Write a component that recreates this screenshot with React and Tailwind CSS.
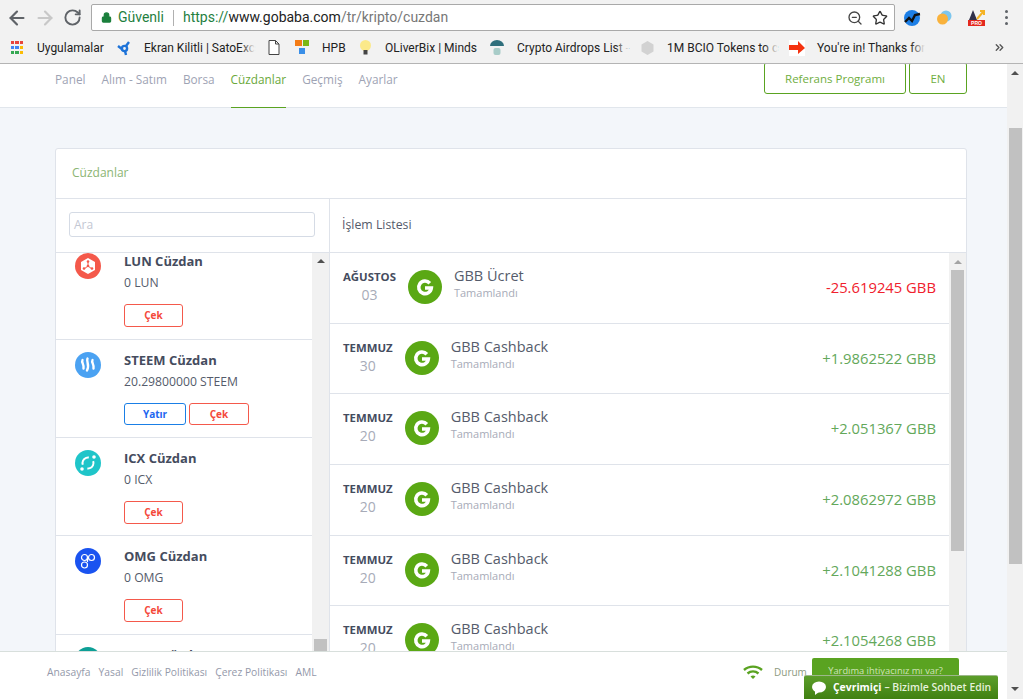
import React from 'react';
import { ArrowLeft, ArrowRight, RotateCw, Lock, ZoomOut, Star, ChevronsRight } from 'lucide-react';

const navItems = ['Panel', 'Alım - Satım', 'Borsa', 'Cüzdanlar', 'Geçmiş', 'Ayarlar'];

const transactions = [
  { month: 'AĞUSTOS', day: '03', title: 'GBB Ücret', amount: '-25.619245 GBB', negative: true },
  { month: 'TEMMUZ', day: '30', title: 'GBB Cashback', amount: '+1.9862522 GBB' },
  { month: 'TEMMUZ', day: '20', title: 'GBB Cashback', amount: '+2.051367 GBB' },
  { month: 'TEMMUZ', day: '20', title: 'GBB Cashback', amount: '+2.0862972 GBB' },
  { month: 'TEMMUZ', day: '20', title: 'GBB Cashback', amount: '+2.1041288 GBB' },
  { month: 'TEMMUZ', day: '20', title: 'GBB Cashback', amount: '+2.1054268 GBB' },
];

const LunIcon = () => (
  <svg width="26" height="26" viewBox="0 0 26 26">
    <circle cx="13" cy="13" r="13" fill="#f4594b" />
    <path d="M13 5l7 4v8l-7 4-7-4V9z" fill="#fff" />
    <path d="M13 13V8M13 13l-4 3M13 13l4 3" stroke="#f4594b" strokeWidth="1" />
    <circle cx="13" cy="8.500" r="1.300" fill="#f4594b" />
    <circle cx="9" cy="15.500" r="1.300" fill="#f4594b" />
    <circle cx="17" cy="15.500" r="1.300" fill="#f4594b" />
    <circle cx="13" cy="13" r="1.300" fill="#f4594b" />
  </svg>
);

const SteemIcon = () => (
  <svg width="26" height="26" viewBox="0 0 26 26">
    <circle cx="13" cy="13" r="13" fill="#4ba2f2" />
    <g fill="none" stroke="#fff" strokeWidth="2.400" strokeLinecap="round">
      <path d="M7.500 8c-1.500 2.500 2 4.500 1 8.500" />
      <path d="M12.500 6.500c-1.500 3 2.500 6-.5 12" />
      <path d="M17.500 8c-1.500 2.500 2 4.500 1 8.500" />
    </g>
  </svg>
);

const IcxIcon = () => (
  <svg width="26" height="26" viewBox="0 0 26 26">
    <circle cx="13" cy="13" r="13" fill="#1fc5c9" />
    <circle cx="13" cy="13" r="5.500" fill="none" stroke="#fff" strokeWidth="2" strokeDasharray="11 6" transform="rotate(-20 13 13)" />
    <circle cx="19" cy="7" r="1.800" fill="#fff" />
    <circle cx="7" cy="19" r="1.800" fill="#fff" />
  </svg>
);

const OmgIcon = () => (
  <svg width="26" height="26" viewBox="0 0 26 26">
    <circle cx="13" cy="13" r="13" fill="#1a53f0" />
    <g fill="none" stroke="#fff" strokeWidth="1.200">
      <circle cx="9.500" cy="9.500" r="3" />
      <circle cx="16.500" cy="9.500" r="3" />
      <circle cx="9.500" cy="17" r="3" />
      <path d="M12.500 9.500v4.500" />
    </g>
  </svg>
);

const wallets = [
  { name: 'LUN Cüzdan', balance: '0 LUN', icon: <LunIcon />, tall: true },
  { name: 'STEEM Cüzdan', balance: '20.29800000 STEEM', icon: <SteemIcon />, deposit: true },
  { name: 'ICX Cüzdan', balance: '0 ICX', icon: <IcxIcon /> },
  { name: 'OMG Cüzdan', balance: '0 OMG', icon: <OmgIcon />, tall: true },
  // only the top of this row shows above the footer
  { name: 'USDT Cüzdan', icon: <div className="w-[26px] h-[26px] rounded-full bg-[#0d9f96]" />, partial: true },
];

const GbbLogo = () => (
  <svg width="34" height="34" viewBox="0 0 34 34" className="shrink-0">
    <circle cx="17" cy="17" r="17" fill="#5aa814" />
    <path d="M21.800 13.200A6.300 6.300 0 1 0 23.300 18h-6.300" fill="none" stroke="#fff" strokeWidth="3.600" />
  </svg>
);

const Arrow = ({ down, color = 'border-b-[#505050]' }) => (
  <div className={down
    ? 'w-0 h-0 border-x-[4px] border-x-transparent border-t-[4px] border-t-[#505050]'
    : `w-0 h-0 border-x-[4px] border-x-transparent border-b-[4px] ${color}`} />
);

const Bookmark = ({ icon, label, width, fade }) => (
  <div className={`flex items-center h-full overflow-hidden whitespace-nowrap shrink-0 ${width}`}>
    <div className="w-[16px] flex justify-center shrink-0">{icon}</div>
    {label && (
      <span className="relative ml-[12px]">
        {label}
        {fade && <span className="absolute right-0 top-0 bottom-0 w-[14px] bg-gradient-to-r from-transparent to-[#f2f2f2]" />}
      </span>
    )}
  </div>
);

const AppsIcon = () => (
  <div className="grid grid-cols-3 gap-[1.500px] w-[13px] h-[13px]">
    {['bg-[#e8453c]', 'bg-[#e8453c]', 'bg-[#e8453c]', 'bg-[#4285f4]', 'bg-[#4285f4]', 'bg-[#fbbc05]', 'bg-[#34a853]', 'bg-[#34a853]', 'bg-[#fbbc05]'].map((c, i) => (
      <div key={i} className={c} />
    ))}
  </div>
);

const BrowserBar = () => (
  <div className="shrink-0 bg-[#f2f2f2] h-[64px] border-b border-[#b4b4b4] font-['Roboto',sans-serif]">
    <div className="flex items-center h-[32px] pt-[3px]">
      <div className="w-[91px] flex items-center pl-[6px] shrink-0">
        <ArrowLeft size={22} className="text-[#5f6368]" strokeWidth={2.4} />
        <ArrowRight size={22} className="text-[#c8c8c8] ml-[6px]" strokeWidth={2.4} />
        <RotateCw size={19} className="text-[#5f6368] ml-[7px]" strokeWidth={2.4} />
      </div>
      <div className="w-[804px] h-[27px] shrink-0 bg-white border border-[#a9a9a9] rounded-[2px] flex items-center pl-[9px] pr-[5px] text-[14px]">
        <Lock size={11} fill="#1a7f3c" className="text-[#1a7f3c] shrink-0" strokeWidth={2.5} />
        <span className="ml-[6px] w-[50px] text-[#1f7f3f]">Güvenli</span>
        <div className="w-px h-[16px] bg-[#b0b0b0] ml-[5px]" />
        <span className="ml-[9px] text-[#222]">
          <span className="text-[#1f7f3f]">https://</span>www.gobaba.com<span className="text-[#777]">/tr/kripto/cuzdan</span>
        </span>
        <ZoomOut size={16} className="ml-auto text-[#444]" />
        <Star size={16} className="ml-[9px] mr-[1px] text-[#333]" strokeWidth={2} />
      </div>
      <div className="flex items-center flex-1 pl-[8px]">
        <svg width="18" height="18" viewBox="0 0 18 18">
          <circle cx="9" cy="9" r="8" fill="#1d7fe6" />
          <path d="M2 13l4-4 3 3 3-6 5-1" fill="none" stroke="#111" strokeWidth="2.400" />
        </svg>
        <svg width="18" height="18" viewBox="0 0 18 18" className="ml-[14px]">
          <circle cx="11" cy="7" r="5.500" fill="#7cc6ee" />
          <circle cx="7.500" cy="10" r="5.500" fill="#f9b23c" />
        </svg>
        <svg width="18" height="18" viewBox="0 0 18 18" className="ml-[15px]">
          <path d="M5 1l4 10H1z" fill="#30304a" />
          <path d="M9 10l6-7M12 2h4v4" fill="none" stroke="#f5b324" strokeWidth="2" />
          <rect x="0" y="11" width="17" height="6" fill="#e4281e" />
          <text x="8.500" y="16" textAnchor="middle" fontSize="5" fontWeight="700" fill="#fff" fontFamily="Liberation Sans, sans-serif">PRO</text>
        </svg>
        <div className="ml-[19px] flex flex-col gap-[3px]">
          <div className="w-[3px] h-[3px] rounded-full bg-[#5f6368]" />
          <div className="w-[3px] h-[3px] rounded-full bg-[#5f6368]" />
          <div className="w-[3px] h-[3px] rounded-full bg-[#5f6368]" />
        </div>
      </div>
    </div>
    <div className="flex items-center h-[31px] text-[12px] text-[#222] pl-[9px]">
      <Bookmark width="w-[107px]" label="Uygulamalar" icon={<AppsIcon />} />
      <Bookmark width="w-[150px]" fade label="Ekran Kilitli | SatoExc" icon={
        <svg width="15" height="16" viewBox="0 0 15 16">
          <g fill="none" stroke="#1e73d8" strokeWidth="2.400">
            <circle cx="7.500" cy="8.500" r="2.600" />
            <path d="M9 6l3-4M5.500 9.500L1 6M8 11l1 4" />
          </g>
        </svg>
      } />
      <Bookmark width="w-[28px]" label="" icon={
        <svg width="12" height="15" viewBox="0 0 12 15">
          <path d="M1 .500h6.500L11 4v10.500H1zM7.500.500V4H11" fill="#fff" stroke="#444" />
        </svg>
      } />
      <Bookmark width="w-[63px]" label="HPB" icon={
        <svg width="15" height="15" viewBox="0 0 15 15">
          <rect x="0" y="0" width="7" height="6" fill="#f47c16" />
          <rect x="8" y="0" width="6" height="6" fill="#7cb816" />
          <rect x="4" y="8" width="6" height="6" fill="#3a8fe8" />
        </svg>
      } />
      <Bookmark width="w-[132px]" label="OLiverBix | Minds" icon={
        <svg width="13" height="16" viewBox="0 0 13 16">
          <circle cx="6.500" cy="5.500" r="5.500" fill="#fbe98a" />
          <rect x="4.500" y="10" width="4" height="4.500" fill="#444" />
        </svg>
      } />
      <Bookmark width="w-[150px]" fade label="Crypto Airdrops List -" icon={
        <svg width="14" height="16" viewBox="0 0 14 16">
          <path d="M0 6a7 6 0 0 1 14 0z" fill="#2f6f7c" />
          <rect x="3.500" y="8" width="7" height="7" rx="2" fill="#a8ccc8" />
        </svg>
      } />
      <Bookmark width="w-[150px]" fade label="1M BCIO Tokens to c" icon={
        <svg width="13" height="14" viewBox="0 0 13 14">
          <path d="M6.500 0l6 3.500v7l-6 3.500-6-3.500v-7z" fill="#d2d2d2" />
        </svg>
      } />
      <Bookmark width="w-[136px]" fade label="You're in! Thanks for" icon={
        <svg width="16" height="16" viewBox="0 0 16 16">
          <rect width="16" height="16" fill="#fff" />
          <path d="M0 5h9V1l7 7-7 6v-4H0z" fill="#f5320f" />
        </svg>
      } />
      <ChevronsRight size={13} strokeWidth={2.5} className="ml-[68px] text-[#555]" />
    </div>
  </div>
);

const PageHeader = () => (
  <div className="shrink-0 h-[44px] bg-white shadow-[inset_0_-1px_0_#e1e6ec] flex pl-[55px] pr-[40px] overflow-hidden">
    <div className="flex gap-[16px] text-[11.800px] text-[#9ea3b4]">
      {navItems.map((item) => (
        <div
          key={item}
          className={item === 'Cüzdanlar'
            ? 'h-[44px] pt-[7px] text-[#6aa83a] border-b border-[#5aa321]'
            : 'h-[44px] pt-[7px]'}
        >
          {item}
        </div>
      ))}
    </div>
    <div className="ml-auto flex gap-[3px] -mt-[2px] text-[11.500px] text-[#6fae3e]">
      <div className="w-[142px] h-[32px] pt-[2px] border border-[#5aa321] rounded-[3px] flex items-center justify-center">Referans Programı</div>
      <div className="w-[58px] h-[32px] pt-[2px] border border-[#5aa321] rounded-[3px] flex items-center justify-center">EN</div>
    </div>
  </div>
);

const WalletRow = ({ wallet }) => (
  <div className={wallet.tall
    ? 'h-[99px] shrink-0 border-b border-[#dfe3ea] flex pl-[19px] pt-[12px]'
    : 'h-[98px] shrink-0 border-b border-[#dfe3ea] flex pl-[19px] pt-[12px]'}
  >
    <div className="w-[26px] h-[26px] shrink-0">{wallet.icon}</div>
    <div className="ml-[23px]">
      <div className="text-[13px] leading-[17px] font-bold text-[#454c5e]">{wallet.name}</div>
      {!wallet.partial && (
        <>
          <div className="mt-[4px] text-[12.200px] leading-[17px] text-[#555b6b]">{wallet.balance}</div>
          <div className="mt-[13px] flex gap-[3px] text-[10px] font-bold">
            {wallet.deposit && (
              <div className="w-[62px] h-[22px] border border-[#1a7fe6] rounded-[3px] text-[#2266f0] flex items-center justify-center">Yatır</div>
            )}
            <div className={wallet.deposit
              ? 'w-[60px] h-[22px] border border-[#f4594b] rounded-[3px] text-[#f4493b] flex items-center justify-center'
              : 'w-[59px] h-[23px] border border-[#f4594b] rounded-[3px] text-[#f4493b] flex items-center justify-center'}
            >
              Çek
            </div>
          </div>
        </>
      )}
    </div>
  </div>
);

const TransactionRow = ({ tx }) => (
  <div className="h-[70.700px] shrink-0 border-b border-[#dfe3ea] flex pl-[13px] pr-[13px] pt-[17px]">
    <div className="text-center shrink-0 -mt-[1px]">
      <div className="text-[11.400px] leading-[15px] font-bold text-[#454c5e]">{tx.month}</div>
      <div className="mt-[2px] text-[14px] leading-[18px] text-[#a7abb8]">{tx.day}</div>
    </div>
    <div className="ml-[12px]"><GbbLogo /></div>
    <div className="ml-[12px] -mt-[3px]">
      <div className="text-[14.500px] leading-[18px] text-[#555b6b]">{tx.title}</div>
      <div className="text-[11px] leading-[16px] text-[#a7abb8]">Tamamlandı</div>
    </div>
    <div className={tx.negative
      ? 'ml-auto mt-[7px] text-[14.800px] leading-[20px] text-[#f0202c]'
      : 'ml-auto mt-[7px] text-[14.800px] leading-[20px] text-[#63a85a]'}
    >
      {tx.amount}
    </div>
  </div>
);

const WalletCard = () => (
  <div className="w-[912px] h-[600px] bg-white border border-[#dfe3ea] rounded-[3px] shrink-0">
    <div className="h-[50px] border-b border-[#dfe3ea] pl-[16px] pb-[1px] flex items-center text-[12px] text-[#8bb573]">Cüzdanlar</div>
    <div className="flex h-[549px]">
      <div className="w-[274px] shrink-0 border-r border-[#dfe3ea] flex flex-col">
        <div className="h-[54px] shrink-0 border-b border-[#dfe3ea] pl-[13px] pt-[13px]">
          <div className="w-[246px] h-[25px] border border-[#d5dbe5] rounded-[3px] pl-[4px] flex items-center text-[12px] text-[#c3c7d3]">Ara</div>
        </div>
        <div className="flex flex-1 overflow-hidden">
          <div className="flex-1 -mt-[12px]">
            {wallets.map((w) => <WalletRow key={w.name} wallet={w} />)}
          </div>
          <div className="w-[17px] shrink-0 bg-[#f1f1f1] flex flex-col items-center">
            <div className="pt-[6px]"><Arrow /></div>
            <div className="mt-[376px] w-[13px] h-[60px] bg-[#c1c1c1]" />
          </div>
        </div>
      </div>
      <div className="flex-1 flex flex-col min-w-0">
        <div className="h-[54px] shrink-0 border-b border-[#dfe3ea] pl-[12px] pt-[17px] text-[12.300px] leading-[18px] text-[#555b6b]">İşlem Listesi</div>
        <div className="flex flex-1 overflow-hidden">
          <div className="flex-1 min-w-0">
            {transactions.map((tx, i) => <TransactionRow key={i} tx={tx} />)}
          </div>
          <div className="w-[17px] shrink-0 bg-[#f1f1f1] flex flex-col items-center">
            <div className="pt-[7px]"><Arrow color="border-b-[#a3a3a3]" /></div>
            <div className="mt-[6px] w-[13px] h-[281px] bg-[#c1c1c1]" />
          </div>
        </div>
      </div>
    </div>
  </div>
);

const PageFooter = () => (
  <div className="relative shrink-0 h-[48px] bg-white border-t border-[#d8dfdc] flex pl-[47px] pr-[48px] pt-[13px]">
    <div className="flex gap-[8px] text-[10.300px] leading-[14px] text-[#9499aa]">
      <span>Anasayfa</span>
      <span>Yasal</span>
      <span>Gizlilik Politikası</span>
      <span>Çerez Politikası</span>
      <span>AML</span>
    </div>
    <div className="ml-auto flex">
      <svg width="20" height="14" viewBox="0 0 20 14" className="shrink-0">
        <g fill="none" stroke="#5aa321" strokeWidth="2.400">
          <path d="M1 5c5-4.500 13-4.500 18 0" />
          <path d="M4.500 8.500c3.200-2.800 7.800-2.800 11 0" />
        </g>
        <path d="M7.500 11.500c1.500-1.200 3.500-1.200 5 0L10 14z" fill="#5aa321" />
      </svg>
      <span className="ml-[11px] w-[31px] text-[10px] leading-[14px] text-[#8d9a80]">Durum</span>
      <div className="ml-[7px] -mt-[7px] w-[147px] h-[24px] bg-[#5aa321] rounded-t-[2px] text-[9.300px] leading-[14px] text-[#cfe4b8] text-center pt-[6px]">Yardıma ihtiyacınız mı var?</div>
    </div>
    {/* chat widget sits over the footer */}
    <div className="absolute left-[804px] top-[23px] w-[194px] h-[25px] bg-gradient-to-b from-[#5c9e2a] to-[#3f7f10] border-t border-[#9db88a] rounded-t-[2px] flex items-center pl-[8px] text-[10.400px] text-white">
      <svg width="14" height="14" viewBox="0 0 14 14" className="shrink-0">
        <ellipse cx="7" cy="6" rx="7" ry="5.500" fill="#fff" />
        <path d="M3 9v5l4-3z" fill="#fff" />
      </svg>
      <span className="ml-[7px] font-bold">Çevrimiçi</span>
      <span className="ml-[3px] font-semibold text-[#e6f2da]">– Bizimle Sohbet Edin</span>
    </div>
  </div>
);

export default function App() {
  return (
    <div className="w-[1023px] h-[699px] flex flex-col overflow-hidden bg-white font-['Open_Sans',sans-serif]">
      <BrowserBar />
      <div className="flex flex-1 min-h-0">
        <div className="w-[1007px] shrink-0 flex flex-col">
          <PageHeader />
          <div className="flex-1 min-h-0 overflow-hidden bg-[#f3f6fa] pl-[55px] pt-[40px]">
            <WalletCard />
          </div>
          <PageFooter />
        </div>
        <div className="flex-1 bg-[#f1f1f1] flex flex-col items-center">
          <div className="pt-[7px]"><Arrow /></div>
          <div className="mt-[53px] w-[13px] h-[436px] bg-[#c1c1c1]" />
          <div className="mt-auto pb-[8px]"><Arrow down /></div>
        </div>
      </div>
    </div>
  );
}
